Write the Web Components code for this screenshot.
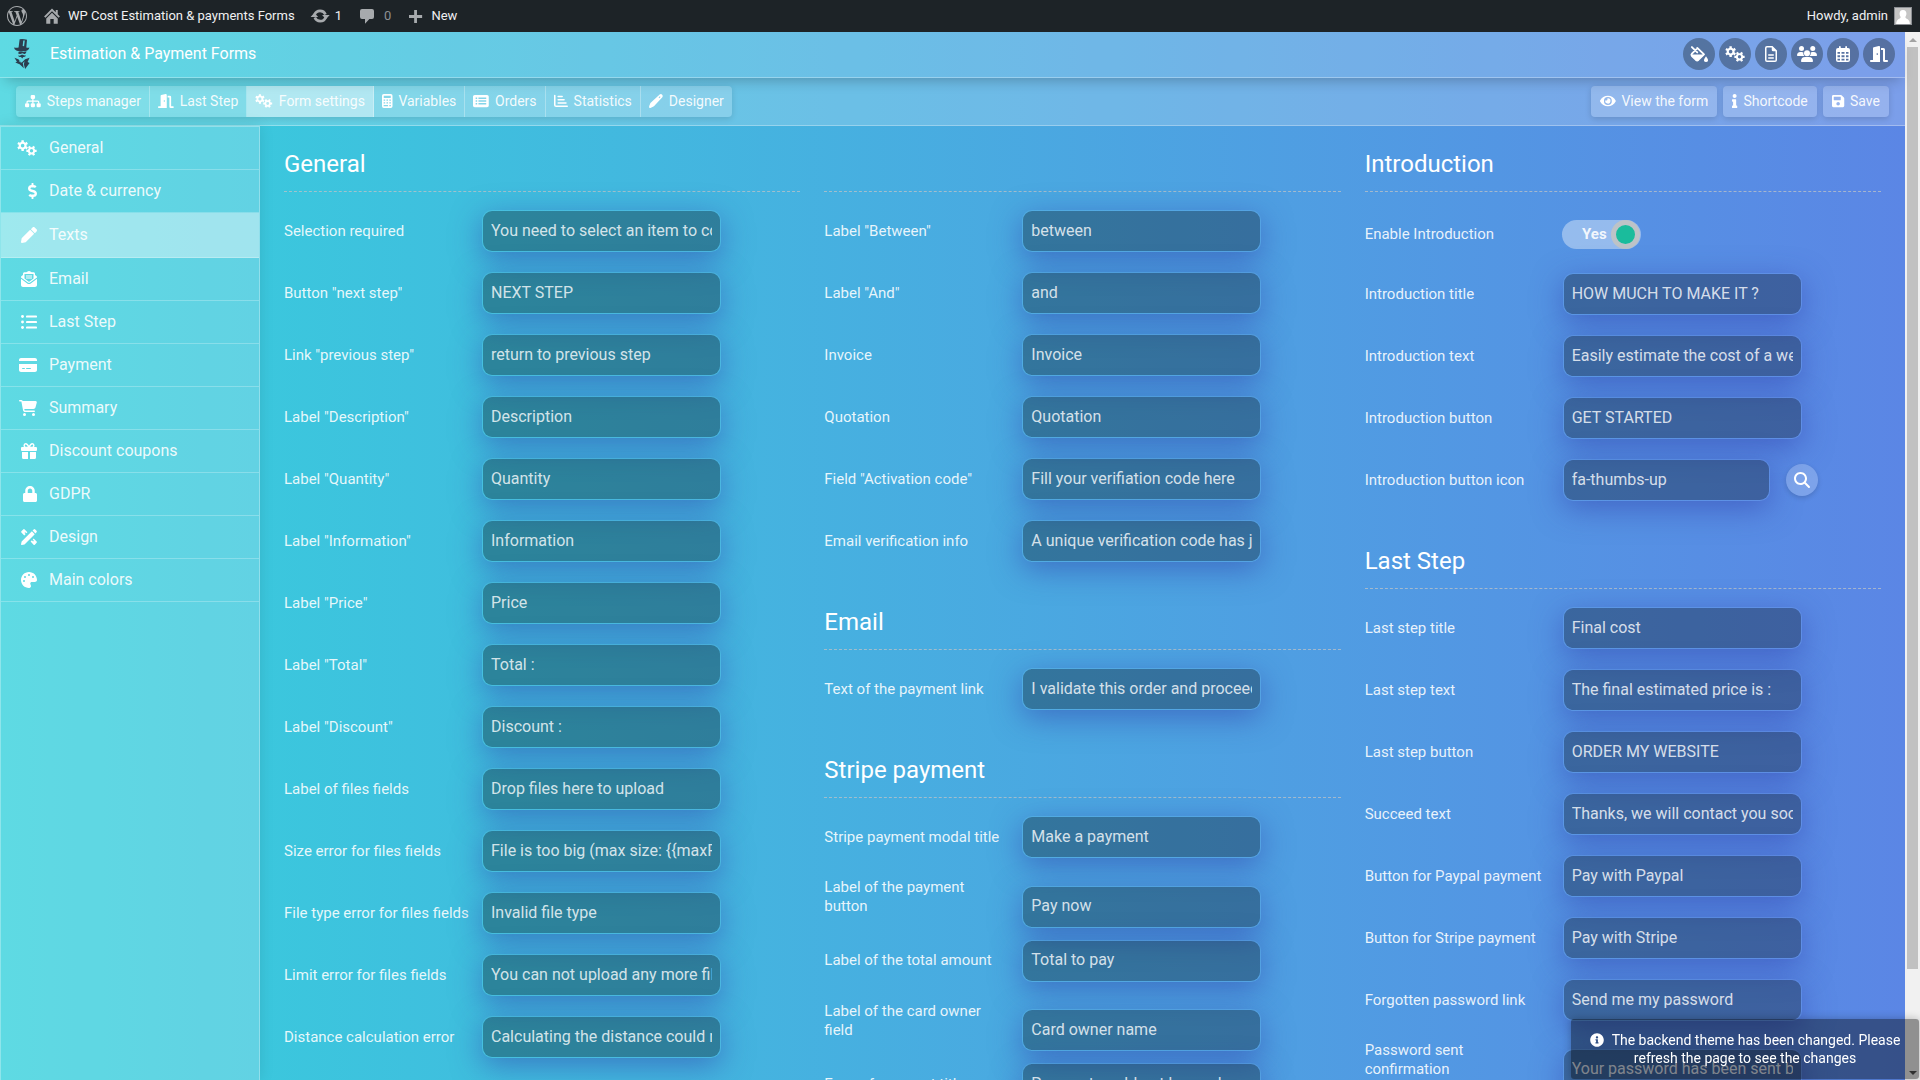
<!DOCTYPE html>
<html lang="en">
<head>
<meta charset="utf-8">
<title>Estimation &amp; Payment Forms</title>
<style>
html, body { margin: 0; height: 100%; }
body { font-family: Roboto, "Liberation Sans", sans-serif; font-size: 16px; color: #fff; overflow: hidden; }
</style>
</head>
<body>
<page-shell>
  <admin-bar slot="admin"></admin-bar>
  <app-header slot="header"></app-header>
  <tool-bar slot="tools"></tool-bar>
  <side-nav slot="nav"></side-nav>
  <form-column>
    <form-section heading="General">
      <text-field label="Selection required" value="You need to select an item to continue"></text-field>
      <text-field label='Button "next step"' value="NEXT STEP"></text-field>
      <text-field label='Link "previous step"' value="return to previous step"></text-field>
      <text-field label='Label "Description"' value="Description"></text-field>
      <text-field label='Label "Quantity"' value="Quantity"></text-field>
      <text-field label='Label "Information"' value="Information"></text-field>
      <text-field label='Label "Price"' value="Price"></text-field>
      <text-field label='Label "Total"' value="Total :"></text-field>
      <text-field label='Label "Discount"' value="Discount :"></text-field>
      <text-field label="Label of files fields" value="Drop files here to upload"></text-field>
      <text-field label="Size error for files fields" value="File is too big (max size: {{maxFilesize}}MB)"></text-field>
      <text-field label="File type error for files fields" value="Invalid file type"></text-field>
      <text-field label="Limit error for files fields" value="You can not upload any more files"></text-field>
      <text-field label="Distance calculation error" value="Calculating the distance could not be performed"></text-field>
    </form-section>
  </form-column>
  <form-column>
    <form-section heading="">
      <text-field label='Label "Between"' value="between"></text-field>
      <text-field label='Label "And"' value="and"></text-field>
      <text-field label="Invoice" value="Invoice"></text-field>
      <text-field label="Quotation" value="Quotation"></text-field>
      <text-field label='Field "Activation code"' value="Fill your verifiation code here"></text-field>
      <text-field label="Email verification info" value="A unique verification code has just been sent"></text-field>
    </form-section>
    <form-section heading="Email">
      <text-field label="Text of the payment link" value="I validate this order and proceed to the payment"></text-field>
    </form-section>
    <form-section heading="Stripe payment">
      <text-field label="Stripe payment modal title" value="Make a payment"></text-field>
      <text-field tall label="Label of the payment button" value="Pay now"></text-field>
      <text-field label="Label of the total amount" value="Total to pay"></text-field>
      <text-field tall label="Label of the card owner field" value="Card owner name"></text-field>
      <text-field label="Error of payment title" value="Payment could not be made"></text-field>
    </form-section>
  </form-column>
  <form-column>
    <form-section heading="Introduction">
      <toggle-field label="Enable Introduction" on="Yes"></toggle-field>
      <text-field label="Introduction title" value="HOW MUCH TO MAKE IT ?"></text-field>
      <text-field label="Introduction text" value="Easily estimate the cost of a website"></text-field>
      <text-field label="Introduction button" value="GET STARTED"></text-field>
      <text-field search label="Introduction button icon" value="fa-thumbs-up"></text-field>
    </form-section>
    <form-section heading="Last Step">
      <text-field label="Last step title" value="Final cost"></text-field>
      <text-field label="Last step text" value="The final estimated price is :"></text-field>
      <text-field label="Last step button" value="ORDER MY WEBSITE"></text-field>
      <text-field label="Succeed text" value="Thanks, we will contact you soon"></text-field>
      <text-field label="Button for Paypal payment" value="Pay with Paypal"></text-field>
      <text-field label="Button for Stripe payment" value="Pay with Stripe"></text-field>
      <text-field label="Forgotten password link" value="Send me my password"></text-field>
      <text-field tall label="Password sent confirmation" value="Your password has been sent by email"></text-field>
    </form-section>
  </form-column>
</page-shell>
<toast-note>The backend theme has been changed. Please refresh the page to see the changes</toast-note>

<script>
// Builds a toothed wheel with a round hole (drawn with the even-odd rule).
function gear(cx, cy, ro, ri, hole, turn) {
  const pts = [];
  for (let i = 0; i < 6; i++) {
    const a = turn + i * Math.PI / 3;
    [[-0.30, ri], [-0.22, ro], [0.22, ro], [0.30, ri]].forEach(([d, r]) =>
      pts.push((cx + r * Math.cos(a + d)).toFixed(1) + ' ' + (cy + r * Math.sin(a + d)).toFixed(1)));
  }
  return 'M' + pts.join('L') + 'Z' +
    `M${cx - hole} ${cy}a${hole} ${hole} 0 1 0 ${2 * hole} 0a${hole} ${hole} 0 1 0 ${-2 * hole} 0Z`;
}
const P = d => `<path fill-rule="evenodd" d="${d}"/>`;
const ICONS = {
  gears: [640, P(gear(180, 180, 178, 128, 58, 0.52)) + P(gear(464, 346, 168, 120, 54, 0))],
  dollar: [288, P('M209.2 233.4l-108-31.6C88.7 198.2 80 186.5 80 173.5c0-16.3 13.2-29.5 29.5-29.5h66.3c12.2 0 24.2 3.7 34.2 10.5 6.1 4.1 14.3 3.1 19.5-2l34.8-34c7.1-6.9 6.1-18.4-1.8-24.5C238 74.8 207.4 64.1 176 64V16c0-8.8-7.2-16-16-16h-32c-8.8 0-16 7.2-16 16v48h-2.5C45.8 64-5.4 118.7.5 183.6c4.2 46.1 39.4 83.6 83.8 96.6l102.5 30c12.5 3.7 21.2 15.3 21.2 28.3 0 16.3-13.2 29.5-29.5 29.5h-66.3C100 368 88 364.3 78 357.5c-6.1-4.1-14.3-3.1-19.5 2l-34.8 34c-7.1 6.9-6.1 18.4 1.8 24.5 24.5 19.2 55.1 29.9 86.5 30v48c0 8.8 7.2 16 16 16h32c8.8 0 16-7.2 16-16v-48.2c46.6-.9 90.3-28.6 105.7-72.7 21.5-61.6-14.6-124.8-72.5-141.7z')],
  pencil: [512, P('M497.9 142.1l-46.1 46.1c-4.7 4.7-12.3 4.7-17 0l-111-111c-4.7-4.7-4.7-12.3 0-17l46.1-46.1c18.7-18.7 49.1-18.7 67.9 0l60.1 60.1c18.8 18.7 18.8 49.1 0 67.9zM284.2 99.8L21.6 362.4.4 483.9c-2.9 16.4 11.4 30.6 27.8 27.8l121.5-21.3 262.6-262.6c4.7-4.7 4.7-12.3 0-17l-111-111c-4.8-4.7-12.4-4.7-17.1 0z')],
  mail: [512, P('M256 0C235 0 215 8 198 20L170 42H112C86 42 64 64 64 90V124L18 160C7 169 0 182 0 196V206L220 368C241 384 271 384 292 368L512 206V196C512 182 505 169 494 160L448 124V90C448 64 426 42 400 42H342L314 20C297 8 277 0 256 0ZM112 96H400V240L264 342Q256 348 248 342L112 240Z') + P('M0 250V448C0 483 29 512 64 512H448C483 512 512 483 512 448V250L312 396C279 420 233 420 200 396Z') + P('M160 140H352V172H160ZM160 204H352V236H160Z')],
  list: [512, '<rect x="160" y="48" width="352" height="64" rx="28"/><rect x="160" y="224" width="352" height="64" rx="28"/><rect x="160" y="400" width="352" height="64" rx="28"/><circle cx="48" cy="80" r="46"/><circle cx="48" cy="256" r="46"/><circle cx="48" cy="432" r="46"/>'],
  card: [576, P('M64 32C28.7 32 0 60.7 0 96v32H576V96c0-35.3-28.7-64-64-64H64zM576 224H0V416c0 35.3 28.7 64 64 64H512c35.3 0 64-28.7 64-64V224zM112 352h64c8.8 0 16 7.2 16 16s-7.2 16-16 16H112c-8.8 0-16-7.2-16-16s7.2-16 16-16zm112 16c0-8.8 7.2-16 16-16H368c8.8 0 16 7.2 16 16s-7.2 16-16 16H240c-8.8 0-16-7.2-16-16z')],
  cart: [576, P('M0 24C0 10.7 10.7 0 24 0H69.5c22 0 41.5 12.8 50.6 32h411c26.3 0 45.5 25 38.6 50.4l-41 152.3c-8.5 31.4-37 53.3-69.5 53.3H170.7l5.4 28.5c2.2 11.3 12.1 19.5 23.6 19.5H488c13.3 0 24 10.7 24 24s-10.7 24-24 24H199.7c-34.6 0-64.3-24.6-70.7-58.5L77.4 54.5c-.7-3.8-4-6.5-7.9-6.5H24C10.7 48 0 37.3 0 24zM128 464a48 48 0 1 1 96 0 48 48 0 1 1 -96 0zm336-48a48 48 0 1 1 0 96 48 48 0 1 1 0-96z')],
  gift: [512, P('M0 160Q0 128 32 128H480Q512 128 512 160V224Q512 256 480 256H32Q0 256 0 224ZM32 288H224V512H80Q32 512 32 464ZM288 288H480V464Q480 512 432 512H288Z') + '<path fill="none" stroke="currentColor" stroke-width="46" d="M256 140H150C84 140 84 26 150 26C200 26 220 60 256 140C292 60 312 26 362 26C428 26 428 140 362 140Z"/>'],
  lock: [448, P('M400 224h-24v-72C376 68.2 307.8 0 224 0S72 68.2 72 152v72H48c-26.5 0-48 21.5-48 48v192c0 26.5 21.5 48 48 48h352c26.5 0 48-21.5 48-48V272c0-26.5-21.5-48-48-48zm-104 0H152v-72c0-39.7 32.3-72 72-72s72 32.3 72 72v72z')],
  ruler: [512, P('M20 400L348 72L440 164L112 492L24 511Q0 514 1 488ZM370 50L405 15Q430 -8 456 15L497 56Q520 82 497 107L462 142Z') + P('M110 10L205 105L172 138L143 109Q132 102 122 110Q112 121 120 132L150 161L105 205L12 112Q-4 92 12 72L70 12Q90 -6 110 10Z') + P('M307 402L402 500Q420 518 442 500L500 442Q518 420 500 402L405 307L374 338L404 368Q412 380 403 390Q390 400 380 391L350 361Z')],
  palette: [512, P('M512 256c0 .9 0 1.8 0 2.7c-.4 36.5-33.6 61.3-70.1 61.3H344c-26.5 0-48 21.5-48 48c0 3.4 .4 6.7 1 9.9c2.1 10.2 6.5 20 10.8 29.9c6.1 13.8 12.1 27.5 12.1 42c0 31.8-21.6 60.7-53.4 62c-3.5 .1-7 .2-10.6 .2C114.6 512 0 397.4 0 256S114.6 0 256 0S512 114.6 512 256zM128 288a32 32 0 1 0 -64 0 32 32 0 1 0 64 0zm0-96a32 32 0 1 0 0-64 32 32 0 1 0 0 64zM288 96a32 32 0 1 0 -64 0 32 32 0 1 0 64 0zm96 96a32 32 0 1 0 0-64 32 32 0 1 0 0 64z')],
  sitemap: [576, '<rect x="208" y="32" width="160" height="148" rx="44"/><rect x="0" y="336" width="152" height="148" rx="44"/><rect x="212" y="336" width="152" height="148" rx="44"/><rect x="424" y="336" width="152" height="148" rx="44"/><path fill="none" stroke="currentColor" stroke-width="46" d="M288 150V350M76 350V290Q76 258 108 258H468Q500 258 500 290V350"/>'],
  door: [576, P('M320 32C320 8 300 -3 280 2L120 40Q96 46 96 70V448H24Q0 452 0 480Q0 508 24 512H320ZM232 232a26 26 0 1 1 0 52a26 26 0 1 1 0-52Z') + P('M352 64H432Q480 64 480 112V448H552Q576 452 576 480Q576 508 552 512H464Q416 512 416 464V128H352Z')],
  calc: [384, P('M64 0H320Q384 0 384 64V448Q384 512 320 512H64Q0 512 0 448V64Q0 0 64 0ZM64 64V144H320V64ZM60 200V250H115V200ZM164 200V250H220V200ZM269 200V250H324V200ZM60 300V350H115V300ZM164 300V350H220V300ZM269 300V350H324V300ZM60 400V450H220V400ZM269 400V450H324V400Z')],
  table: [576, P('M0 96C0 60 28 32 64 32H512C548 32 576 60 576 96V416C576 452 548 480 512 480H64C28 480 0 452 0 416ZM96 132V180H152V132ZM200 132V180H484V132ZM96 232V280H152V232ZM200 232V280H484V232ZM96 332V380H152V332ZM200 332V380H484V332Z')],
  chart: [512, '<path fill="none" stroke="currentColor" stroke-width="56" stroke-linecap="round" d="M28 58V400Q28 450 78 450H484"/><path fill="none" stroke="currentColor" stroke-width="50" stroke-linecap="round" d="M150 90H300M150 210H370M150 330H440"/>'],
  pen: [512, P('M8 440L52 330L390 18Q440 -18 482 26Q524 70 488 120L180 452L72 502Q30 520 12 500Q-2 484 8 440ZM352 130L396 86L420 110L376 154Z')],
  eye: [576, P('M572.52 241.4C518.29 135.59 410.93 64 288 64S57.68 135.64 3.48 241.41a32.35 32.35 0 0 0 0 29.19C57.71 376.41 165.07 448 288 448s230.32-71.64 284.52-177.41a32.35 32.35 0 0 0 0-29.19zM288 400a144 144 0 1 1 144-144 143.93 143.93 0 0 1-144 144zm0-240a95.31 95.31 0 0 0-25.31 3.79 47.85 47.85 0 0 1-66.9 66.9A95.78 95.78 0 1 0 288 160z')],
  info: [192, P('M20 424.229h20V279.771H20c-11.046 0-20-8.954-20-20V212c0-11.046 8.954-20 20-20h112c11.046 0 20 8.954 20 20v212.229h20c11.046 0 20 8.954 20 20V492c0 11.046-8.954 20-20 20H20c-11.046 0-20-8.954-20-20v-47.771c0-11.046 8.954-20 20-20zM96 0C56.235 0 24 32.235 24 72s32.235 72 72 72 72-32.235 72-72S135.764 0 96 0z')],
  save: [448, P('M433.941 129.941l-83.882-83.882A48 48 0 0 0 316.118 32H48C21.49 32 0 53.49 0 80v352c0 26.51 21.49 48 48 48h352c26.51 0 48-21.49 48-48V163.882a48 48 0 0 0-14.059-33.941zM224 416c-35.346 0-64-28.654-64-64 0-35.346 28.654-64 64-64s64 28.654 64 64c0 35.346-28.654 64-64 64zm96-304.52V212c0 6.627-5.373 12-12 12H76c-6.627 0-12-5.373-12-12V108c0-6.627 5.373-12 12-12h228.52c3.183 0 6.235 1.264 8.485 3.515l3.48 3.48A11.996 11.996 0 0 1 320 111.48z')],
  search: [512, P('M416 208c0 45.9-14.9 88.3-40 122.7L502.6 457.4c12.5 12.5 12.5 32.8 0 45.3s-32.8 12.5-45.3 0L330.7 376c-34.4 25.2-76.8 40-122.7 40C93.1 416 0 322.9 0 208S93.1 0 208 0S416 93.1 416 208zM208 352a144 144 0 1 0 0-288 144 144 0 1 0 0 288z')],
  note: [512, P('M256 8C119.043 8 8 119.083 8 256c0 136.997 111.043 248 248 248s248-111.003 248-248C504 119.083 392.957 8 256 8zm0 110c23.196 0 42 18.804 42 42s-18.804 42-42 42-42-18.804-42-42 18.804-42 42-42zm56 254c0 6.627-5.373 12-12 12h-88c-6.627 0-12-5.373-12-12v-24c0-6.627 5.373-12 12-12h12v-64h-12c-6.627 0-12-5.373-12-12v-24c0-6.627 5.373-12 12-12h64c6.627 0 12 5.373 12 12v100h12c6.627 0 12 5.373 12 12v24z')],
  drip: [576, '<path fill="none" stroke="currentColor" stroke-width="60" stroke-linejoin="round" stroke-linecap="round" d="M60 34L232 206M232 60L448 270L266 446Q228 480 190 446L62 322Q28 284 62 246L232 76"/>' + P('M50 268H450L266 452Q228 486 190 452L56 322Z') + P('M512 330Q576 420 576 452Q572 510 512 512Q452 510 448 452Q448 420 512 330Z')],
  file: [384, P('M64 0H240L384 144V448Q384 512 320 512H64Q0 512 0 448V64Q0 0 64 0ZM64 48Q48 48 48 64V448Q48 464 64 464H320Q336 464 336 448V168H260Q216 168 216 124V48Z') + '<rect x="96" y="260" width="192" height="48" rx="24"/><rect x="96" y="356" width="192" height="48" rx="24"/>'],
  users: [640, '<circle cx="144" cy="80" r="80"/><circle cx="504" cy="80" r="80"/><circle cx="320" cy="232" r="96"/>' + P('M0 298Q2 196 106 192H150Q184 192 206 208Q184 270 234 320H22Q0 320 0 298ZM640 298Q638 196 534 192H490Q456 192 436 208Q456 270 406 320H618Q640 320 640 298ZM128 486Q130 356 262 352H378Q510 356 512 486Q512 512 486 512H154Q128 512 128 486Z')],
  calendar: [448, P('M96 24Q100 0 124 0Q148 2 152 24V64H296V24Q300 0 324 0Q348 2 352 24V64H384Q448 64 448 128V448Q448 512 384 512H64Q0 512 0 448V128Q0 64 64 64H96ZM48 192V248H128V192ZM176 192V248H272V192ZM320 192V248H400V192ZM48 296V360H128V296ZM176 296V360H272V296ZM320 296V360H400V296ZM48 408V448Q48 464 64 464H128V408ZM176 408V464H272V408ZM320 408V464H384Q400 464 400 448V408Z')],
  wordpress: [512, '<g transform="scale(21.333)">' + P('M21.469 6.825c.84 1.537 1.318 3.3 1.318 5.175 0 3.979-2.156 7.456-5.363 9.325l3.295-9.527c.615-1.54.82-2.771.82-3.864 0-.405-.026-.78-.07-1.11m-7.981.105c.647-.03 1.232-.105 1.232-.105.582-.075.514-.93-.067-.899 0 0-1.755.135-2.88.135-1.064 0-2.85-.15-2.85-.15-.585-.03-.661.855-.075.885 0 0 .54.061 1.125.09l1.68 4.605-2.37 7.08L5.354 6.9c.649-.03 1.234-.1 1.234-.1.585-.075.516-.93-.065-.896 0 0-1.746.138-2.874.138-.2 0-.438-.008-.69-.015C4.911 3.15 8.235 1.215 12 1.215c2.809 0 5.365 1.072 7.286 2.833-.046-.003-.091-.009-.141-.009-1.06 0-1.812.923-1.812 1.914 0 .89.513 1.643 1.06 2.531.411.72.89 1.643.89 2.977 0 .915-.354 1.994-.821 3.479l-1.075 3.585-3.9-11.61.001.014zM12 22.784c-1.059 0-2.081-.153-3.048-.437l3.237-9.406 3.315 9.087c.024.053.05.101.078.149-1.12.393-2.325.609-3.582.609M1.211 12c0-1.564.336-3.05.935-4.39L7.29 21.709C3.694 19.96 1.212 16.271 1.211 12M12 0C5.385 0 0 5.385 0 12s5.385 12 12 12 12-5.385 12-12S18.615 0 12 0') + '</g>'],
  home: [512, P('M256 16L376 136V60H440V200L510 270L466 310L256 104L46 310L2 270ZM256 150L440 332V500H310V350H202V500H72V332Z')],
  update: [576, '<path fill="none" stroke="currentColor" stroke-width="76" d="M132 216A166 166 0 0 1 440 214M444 296A166 166 0 0 1 136 298"/>' + P('M344 230H560L452 350ZM232 282H16L124 162Z')],
  comment: [448, P('M64 32H384Q448 32 448 96V290Q448 354 384 354H300L160 500V354H64Q0 354 0 290V96Q0 32 64 32Z')],
  plus: [448, P('M176 32H272V208H448V304H272V480H176V304H0V208H176Z')],
  person: [512, P('M256 60C330 60 366 110 366 180C366 230 340 270 330 290Q330 320 360 335Q470 370 476 512H36Q42 370 152 335Q182 320 182 290C172 270 146 230 146 180C146 110 182 60 256 60Z')],
  gentleman: [272, P('M96 6Q150 -6 222 14L210 146Q240 152 262 146Q256 190 200 204Q110 224 40 196Q4 180 0 146Q40 156 78 144ZM158 24L148 120L172 122L184 26Z') + P('M96 212L66 240Q90 266 118 252L150 244Q176 270 200 242L216 212L184 212Q160 228 140 216ZM130 268Q86 296 70 276Q80 318 120 306L140 334L158 306Q196 312 206 278Q174 290 150 268Z') + P('M8 322L74 346L130 404L190 346L266 322L232 392L266 408L190 510L168 430L180 380L150 412L168 500L96 430L22 402L50 390ZM84 372L114 410L104 372Z')]
};

class IconGlyph extends HTMLElement {
  connectedCallback() {
    const [w, body] = ICONS[this.getAttribute('name')];
    this.attachShadow({ mode: 'open' }).innerHTML = `
      <style>
        :host { display: inline-flex; flex: none; height: 1em; }
        svg { display: block; height: 100%; fill: currentColor; aspect-ratio: ${w} / 512; overflow: visible; }
      </style>
      <svg viewBox="0 0 ${w} 512" aria-hidden="true">${body}</svg>`;
  }
}

// Base class: renders the markup returned by view() into an open shadow root.
class Part extends HTMLElement {
  connectedCallback() {
    this.attachShadow({ mode: 'open' }).innerHTML = this.view();
  }
}

class PageShell extends Part {
  view() {
    return `
      <style>
        :host { display: flex; flex-direction: column; height: 100vh; }
        .body { flex: 1; min-height: 0; display: flex; }
        .app { flex: 1; min-width: 0; display: flex; flex-direction: column; background: linear-gradient(to right, #36d1dc, #5b86e5); }
        .main { flex: 1; min-height: 0; display: flex; }
        main { flex: 1; min-width: 0; display: flex; align-items: flex-start; padding: 0 12px; overflow: hidden; }
        ::slotted(form-column) { flex: 1 1 0; min-width: 0; }
      </style>
      <slot name="admin"></slot>
      <div class="body">
        <div class="app">
          <slot name="header"></slot>
          <slot name="tools"></slot>
          <div class="main">
            <slot name="nav"></slot>
            <main><slot></slot></main>
          </div>
        </div>
        <page-scrollbar></page-scrollbar>
      </div>`;
  }
}

class PageScrollbar extends Part {
  view() {
    return `
      <style>
        :host { flex: none; width: 15px; background: #f1f1f1; display: flex; flex-direction: column; align-items: center; }
        i { flex: none; height: 15px; display: flex; align-items: center; }
        i::before { content: ""; border: 4px solid transparent; border-top-width: 0; border-bottom: 4px solid #a3a3a3; }
        i:last-child::before { border-bottom-width: 0; border-top: 4px solid #505050; }
        .thumb { flex: 922; width: 11px; background: #c1c1c1; }
        .rest { flex: 96; }
      </style>
      <i></i><div class="thumb"></div><div class="rest"></div><i></i>`;
  }
}

class AdminBar extends Part {
  view() {
    return `
      <style>
        :host { flex: none; display: flex; align-items: center; height: 32px; padding: 0 8px 0 7px; background: #1d2327; font-size: 13px; line-height: 32px; }
        a { display: flex; align-items: center; color: #f0f0f1; text-decoration: none; gap: 8px; height: 30px; }
        icon-glyph { color: #a7aaad; font-size: 16px; }
        .wp icon-glyph { font-size: 20px; }
        .home { margin-left: 17px; }
        .upd { margin-left: 16px; gap: 6px; }
        .upd icon-glyph { font-size: 18px; width: 18px; justify-content: center; }
        .com { margin-left: 18px; gap: 10px; color: #8c8f94; }
        .new { margin-left: 18px; gap: 9px; }
        .new icon-glyph { font-size: 15px; }
        .me { margin-left: auto; gap: 6px; }
        .me span { display: flex; width: 16px; height: 16px; border: 1px solid #8c8f94; background: #c5c5c5; }
        .me icon-glyph { color: #fff; }
      </style>
      <a class="wp" href="#" aria-label="About WordPress"><icon-glyph name="wordpress"></icon-glyph></a>
      <a class="home" href="#"><icon-glyph name="home"></icon-glyph>WP Cost Estimation &amp; payments Forms</a>
      <a class="upd" href="#"><icon-glyph name="update"></icon-glyph>1</a>
      <a class="com" href="#"><icon-glyph name="comment"></icon-glyph>0</a>
      <a class="new" href="#"><icon-glyph name="plus"></icon-glyph>New</a>
      <a class="me" href="#">Howdy, admin<span><icon-glyph name="person"></icon-glyph></span></a>`;
  }
}

class AppHeader extends Part {
  view() {
    const tools = [['drip', 'Theme'], ['gears', 'Settings'], ['file', 'Forms'], ['users', 'Customers'], ['calendar', 'Calendar'], ['door', 'Exit']];
    return `
      <style>
        :host { flex: none; display: flex; align-items: center; height: 44px; padding: 0 10px 1px 14px; background: rgba(255,255,255,.2); border-bottom: 1px solid rgba(255,255,255,.3); box-shadow: 0 8px 14px -6px rgba(0,0,0,.25); z-index: 2; }
        .logo { color: #2c3e50; font-size: 30px; margin-right: 20px; }
        h1 { margin: 0; font-size: 16px; font-weight: 400; line-height: 20px; flex: 1; }
        nav { display: flex; gap: 4px; }
        button { width: 32px; height: 32px; padding: 0; border: 0; border-radius: 50%; background: rgba(44,62,80,.47); color: #fff; font-size: 16px; display: flex; align-items: center; justify-content: center; }
      </style>
      <icon-glyph class="logo" name="gentleman"></icon-glyph>
      <h1>Estimation &amp; Payment Forms</h1>
      <nav>${tools.map(([i, t]) => `<button type="button" aria-label="${t}"><icon-glyph name="${i}"></icon-glyph></button>`).join('')}</nav>`;
  }
}

class ToolBar extends Part {
  view() {
    const tabs = [['sitemap', 'Steps manager'], ['door', 'Last Step'], ['gears', 'Form settings'], ['calc', 'Variables'], ['table', 'Orders'], ['chart', 'Statistics'], ['pen', 'Designer']];
    const acts = [['eye', 'View the form'], ['info', 'Shortcode'], ['save', 'Save']];
    const btn = ([i, t]) => `<button type="button"${t === 'Form settings' ? ' class="on"' : ''}><icon-glyph name="${i}"></icon-glyph>${t}</button>`;
    return `
      <style>
        :host { flex: none; display: flex; align-items: center; justify-content: space-between; height: 47px; padding: 0 16px; background: rgba(255,255,255,.2); border-bottom: 1px solid rgba(255,255,255,.3); }
        div { display: flex; }
        .tabs { border-radius: 4px; box-shadow: 0 2px 6px rgba(0,0,0,.12); }
        .acts { gap: 6px; }
        button { box-sizing: border-box; display: flex; align-items: center; gap: 6px; height: 31px; padding: 0 8px 1px; border: 0; background: rgba(255,255,255,.2); color: rgba(255,255,255,.92); font: 14px/20px Roboto, "Liberation Sans", sans-serif; }
        .tabs button { border-right: 1px solid rgba(255,255,255,.3); }
        .tabs button:first-child { border-radius: 4px 0 0 4px; padding-left: 9px; }
        .tabs button:last-child { border-radius: 0 4px 4px 0; border-right: 0; }
        .tabs .on { background: rgba(255,255,255,.5); }
        .acts button { border-radius: 4px; padding: 0 9px 1px; box-shadow: 0 2px 6px rgba(0,0,0,.15); }
        icon-glyph { color: #fff; }
      </style>
      <div class="tabs">${tabs.map(btn).join('')}</div>
      <div class="acts">${acts.map(btn).join('')}</div>`;
  }
}

class SideNav extends Part {
  view() {
    const items = [['gears', 'General'], ['dollar', 'Date &amp; currency'], ['pencil', 'Texts'], ['mail', 'Email'], ['list', 'Last Step'], ['card', 'Payment'], ['cart', 'Summary'], ['gift', 'Discount coupons'], ['lock', 'GDPR'], ['ruler', 'Design'], ['palette', 'Main colors']];
    return `
      <style>
        :host { flex: none; box-sizing: border-box; width: 260px; background: rgba(255,255,255,.2); border: 1px solid rgba(255,255,255,.3); border-bottom: 0; box-shadow: 0 0 14px rgba(0,0,0,.1); }
        a { display: flex; align-items: center; gap: 12px; height: 41px; padding: 0 0 1px 16px; border-bottom: 1px solid rgba(255,255,255,.25); color: rgba(255,255,255,.9); font-size: 16px; text-decoration: none; }
        a.on { height: 43px; background: rgba(255,255,255,.4); }
        span { display: flex; justify-content: flex-end; width: 20px; color: #fff; }
      </style>
      ${items.map(([i, t]) => `<a href="#"${t === 'Texts' ? ' class="on"' : ''}><span><icon-glyph name="${i}"></icon-glyph></span>${t}</a>`).join('')}`;
  }
}

class FormColumn extends Part {
  view() {
    return `
      <style>
        :host { display: flex; flex-direction: column; gap: 24px; box-sizing: border-box; padding: 22px 12px 0; }
      </style>
      <slot></slot>`;
  }
}

class FormSection extends Part {
  view() {
    return `
      <style>
        :host { display: block; }
        h2 { margin: 0 0 18px; min-height: 32px; padding-bottom: 11px; border-bottom: 1px dashed rgba(189,195,199,.75); font-size: 24px; font-weight: 400; line-height: 32px; }
      </style>
      <h2>${this.getAttribute('heading')}</h2>
      <slot></slot>`;
  }
}

class TextField extends Part {
  view() {
    const esc = s => s.replace(/&/g, '&amp;').replace(/"/g, '&quot;');
    return `
      <style>
        :host { display: flex; align-items: last baseline; margin-bottom: 20px; }
        :host([tall]) { margin-bottom: 12px; }
        label { flex: none; width: 185px; margin-right: 13px; font-size: 15px; line-height: 19px; color: rgba(255,255,255,.88); }
        input { box-sizing: border-box; width: 239px; height: 42px; padding: 0 8px 2px; border: 1px solid rgba(255,255,255,.04); border-radius: 10px; background: rgba(0,0,0,.3) padding-box; box-shadow: 0 8px 30px rgba(48,60,170,.5); color: rgba(255,255,255,.8); font: 16px/20px Roboto, "Liberation Sans", sans-serif; outline: 0; }
        :host([search]) input { width: 207px; margin-right: 16px; }
        button { align-self: center; flex: none; width: 32px; height: 32px; padding: 0; border: 0; border-radius: 50%; background: rgba(255,255,255,.22); color: #fff; font-size: 16px; display: flex; align-items: center; justify-content: center; box-shadow: 0 2px 5px rgba(0,0,0,.15); }
      </style>
      <label for="f">${esc(this.getAttribute('label'))}</label>
      <input id="f" type="text" value="${esc(this.getAttribute('value'))}">
      ${this.hasAttribute('search') ? '<button type="button" aria-label="Choose an icon"><icon-glyph name="search"></icon-glyph></button>' : ''}`;
  }
}

class ToggleField extends Part {
  view() {
    return `
      <style>
        :host { display: flex; align-items: center; padding: 10px 0 4px; margin-bottom: 20px; }
        label { font-size: 15px; line-height: 19px; color: rgba(255,255,255,.88); }
        .name { flex: none; width: 185px; margin-right: 12px; }
        .track { box-sizing: border-box; display: flex; align-items: center; justify-content: flex-end; gap: 4px; width: 79px; height: 29px; padding-right: 1px; border-radius: 15px; background: rgba(255,255,255,.38); font-weight: 700; color: rgba(255,255,255,.9); }
        input { appearance: none; box-sizing: border-box; margin: 0; width: 29px; height: 29px; border: 5px solid #bdc3c7; border-radius: 50%; background: #7f8c9a; }
        input:checked { background: #1abc9c; }
      </style>
      <label class="name" for="t">${this.getAttribute('label')}</label>
      <label class="track">${this.getAttribute('on')}<input id="t" type="checkbox" role="switch" checked></label>`;
  }
}

class ToastNote extends Part {
  view() {
    return `
      <style>
        :host { position: fixed; right: 1px; bottom: 1px; z-index: 10; box-sizing: border-box; width: 348px; min-height: 60px; padding: 12px 16px; border-radius: 3px; background: rgba(0,0,0,.4); box-shadow: 0 0 8px rgba(0,0,0,.25); font-size: 14px; line-height: 18px; text-align: center; }
        icon-glyph { vertical-align: -2px; margin-right: 8px; }
      </style>
      <icon-glyph name="note"></icon-glyph><slot></slot>`;
  }
}

customElements.define('icon-glyph', IconGlyph);
customElements.define('page-scrollbar', PageScrollbar);
customElements.define('admin-bar', AdminBar);
customElements.define('app-header', AppHeader);
customElements.define('tool-bar', ToolBar);
customElements.define('side-nav', SideNav);
customElements.define('form-column', FormColumn);
customElements.define('form-section', FormSection);
customElements.define('text-field', TextField);
customElements.define('toggle-field', ToggleField);
customElements.define('toast-note', ToastNote);
customElements.define('page-shell', PageShell);
</script>
</body>
</html>
